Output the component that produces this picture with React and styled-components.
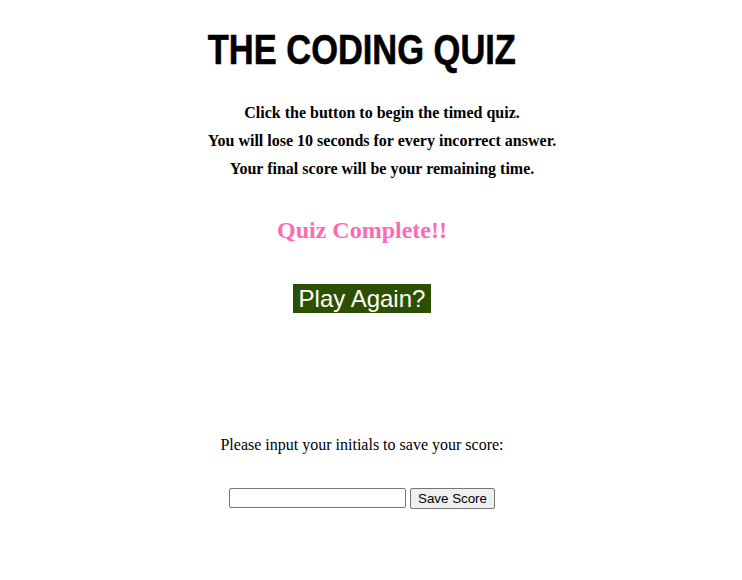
import React from 'react';
import styled, { createGlobalStyle } from 'styled-components';

const Global = createGlobalStyle`
    body {
        margin: 0;
        background: #fff;
        font-family: "Liberation Serif", "Times New Roman", serif;
    }
`;

const Page = styled.div`
    width: 724px;
    display: flex;
    flex-direction: column;
    align-items: center;
`;

const Title = styled.h1`
    margin: 26px 0 0;
    font-family: "Liberation Sans", Arial, sans-serif;
    font-weight: 700;
    font-size: 42px;
    line-height: 48px;
    color: #000;
    transform: scaleX(0.82);
    -webkit-text-stroke: 0.6px #000;
`;

const Rules = styled.div`
    margin-top: 25px;
    padding-left: 40px;
    display: flex;
    flex-direction: column;
    align-items: center;
`;

const Rule = styled.p`
    margin: 0;
    font-weight: 700;
    font-size: 16px;
    line-height: 28px;
`;

const Status = styled.h2`
    margin: 33px 0 0;
    font-size: 24px;
    line-height: 28px;
    font-weight: 700;
    color: #ff69b4;
`;

const PlayButton = styled.button`
    margin-top: 40px;
    border: none;
    background: #2d5000;
    color: #fff;
    font-family: "Liberation Sans", Arial, sans-serif;
    font-size: 24px;
    line-height: 29px;
    height: 29px;
    padding: 0 6px;
`;

const Prompt = styled.p`
    margin: 122px 0 0;
    font-size: 16px;
    line-height: 20px;
`;

const SaveRow = styled.div`
    margin-top: 33px;
    display: flex;
    gap: 4px;
`;

const Initials = styled.input`
    width: 171px;
    height: 16px;
    padding: 1px 2px;
    border: 1px solid #767676;
    border-radius: 2px;
`;

const SaveButton = styled.button`
    font-family: "Liberation Sans", Arial, sans-serif;
    font-size: 13.33px;
    height: 21px;
    padding: 1px 7px;
    border: 1px solid #767676;
    border-radius: 2px;
    background: #efefef;
    color: #000;
`;

export default function App() {
    return (
        <Page>
            <Global />
            <Title>THE CODING QUIZ</Title>
            <Rules>
                <Rule>Click the button to begin the timed quiz.</Rule>
                <Rule>You will lose 10 seconds for every incorrect answer.</Rule>
                <Rule>Your final score will be your remaining time.</Rule>
            </Rules>
            <Status>Quiz Complete!!</Status>
            <PlayButton>Play Again?</PlayButton>
            <Prompt>Please input your initials to save your score:</Prompt>
            <SaveRow>
                <Initials type="text" />
                <SaveButton>Save Score</SaveButton>
            </SaveRow>
        </Page>
    );
}
